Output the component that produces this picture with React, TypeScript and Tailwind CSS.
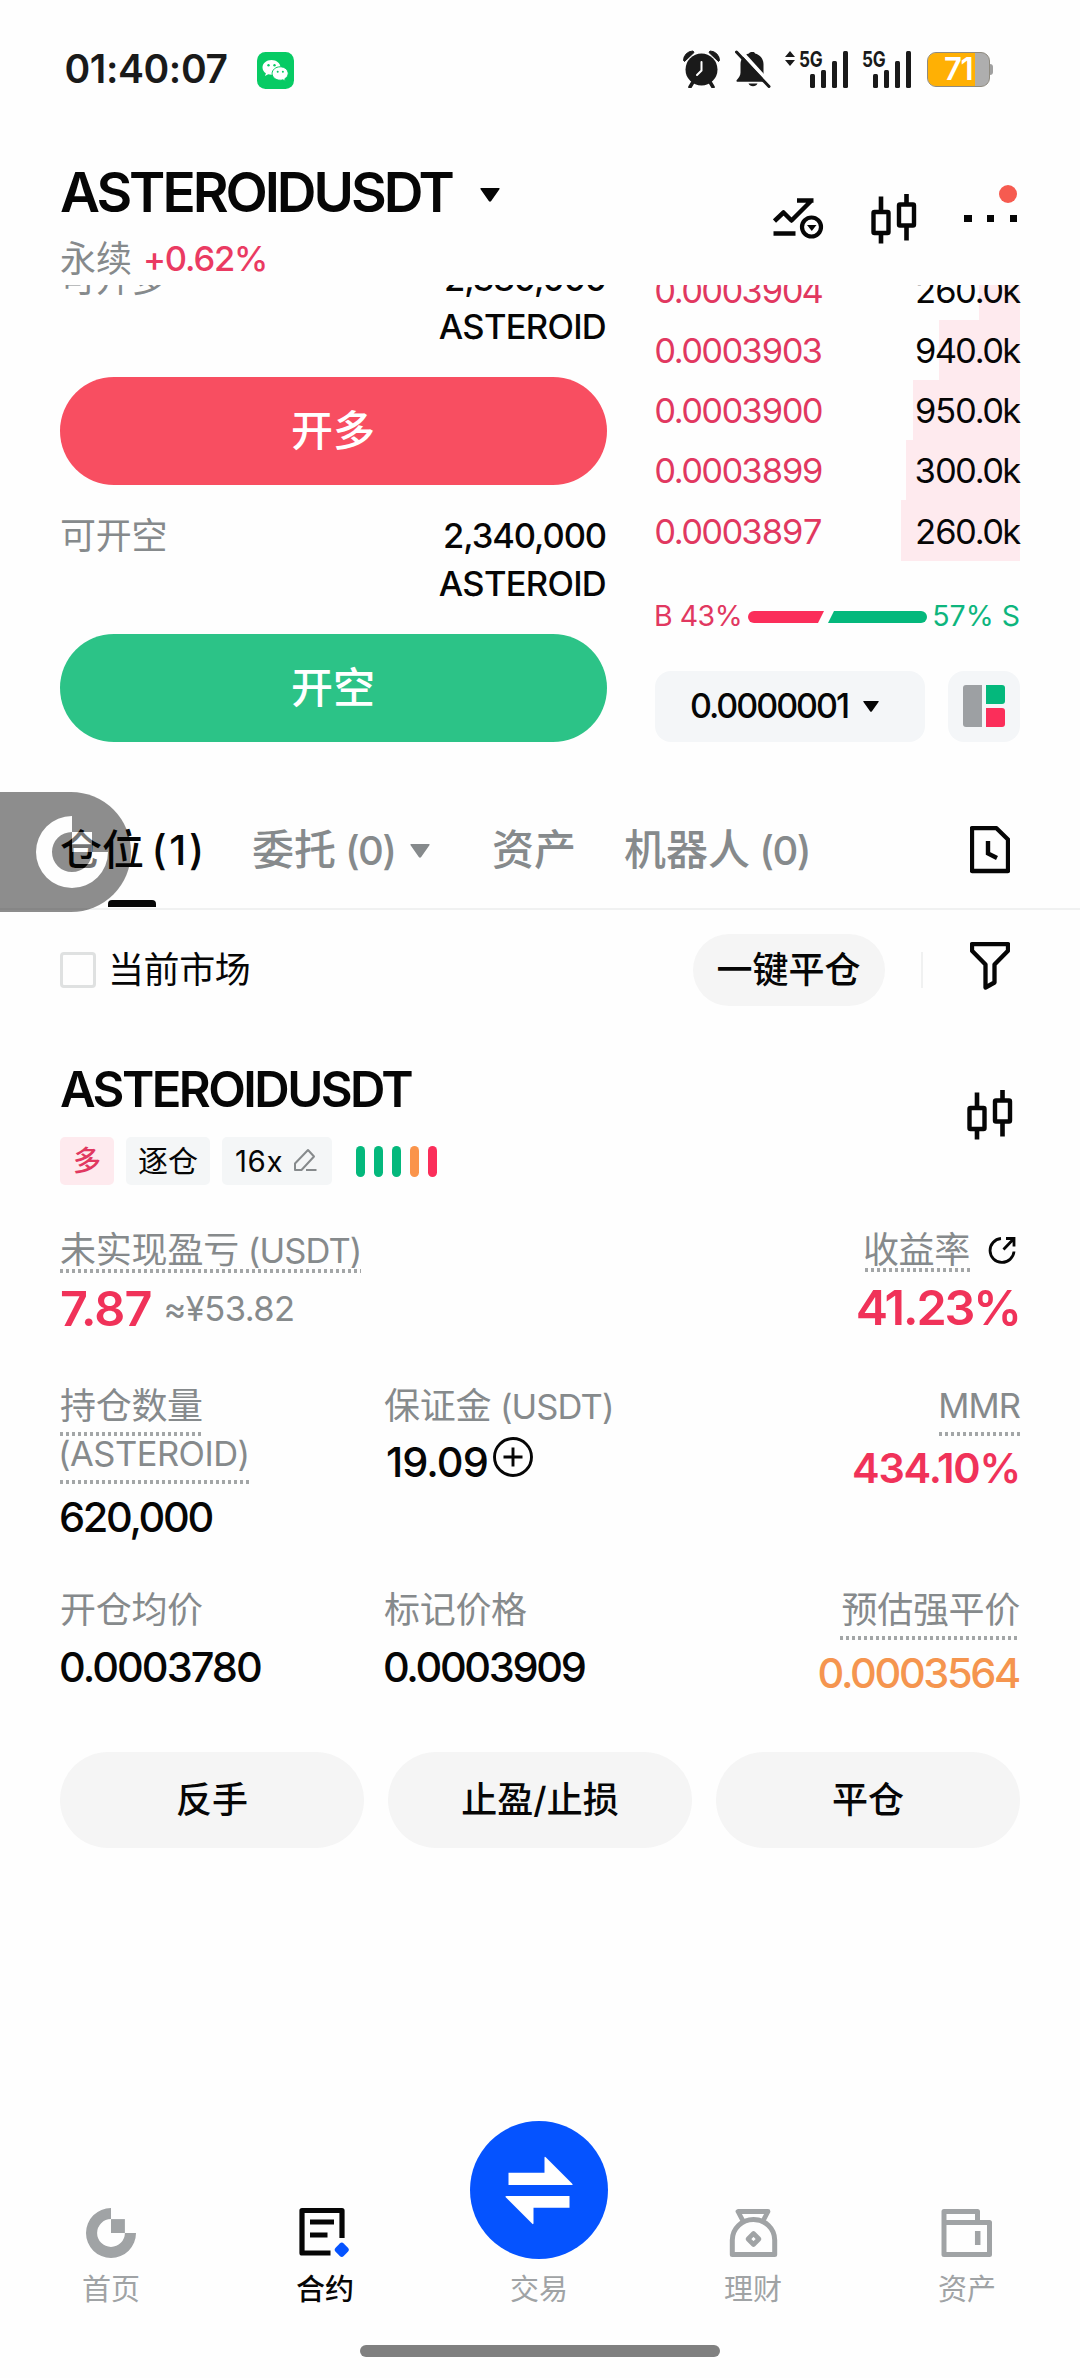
import type { ReactNode } from 'react';

type SvgProps = { box: string; w: number; h: number; className?: string; children: ReactNode };

function Icon({ box, w, h, className = '', children }: SvgProps) {
  return (
    <svg viewBox={box} width={w} height={h} fill="none" className={`shrink-0 ${className}`}>
      {children}
    </svg>
  );
}

function Candles({ className = '' }: { className?: string }) {
  return (
    <Icon box="0 0 46 50" w={46} h={50} className={className}>
      <rect x="2.500" y="18" width="15" height="21" rx="1" stroke="#060606" strokeWidth="4.400" />
      <rect x="28" y="10.500" width="15" height="21" rx="1" stroke="#060606" strokeWidth="4.400" />
      <path d="M10 2.500v15M10 40v9.500M35.500 0v10M35.500 32v14.500" stroke="#060606" strokeWidth="4.600" />
    </Icon>
  );
}

function Caret({ w, h, className = '' }: { w: number; h: number; className?: string }) {
  return (
    <svg viewBox="0 0 20 14" width={w} height={h} preserveAspectRatio="none" className={`shrink-0 ${className}`}>
      <path d="M1.200 0h17.600q1.600 0 .6 1.200l-8.200 11.800q-1.200 1.600-2.400 0L.6 1.200Q-.4 0 1.200 0z" fill="currentColor" />
    </svg>
  );
}

function RingLogo({ size, className = '' }: { size: number; className?: string }) {
  return (
    <svg viewBox="0 0 72 72" width={size} height={size} fill="currentColor" className={`shrink-0 ${className}`}>
      <path d="M36 0A36 36 0 1 0 72 36H56A20 20 0 1 1 36 16z" />
      <path d="M36 16h20v20H36z" />
    </svg>
  );
}

function Dots({ className = '' }: { className?: string }) {
  return (
    <div
      className={`h-[4px] bg-[repeating-linear-gradient(90deg,#a3a6a7_0_3px,transparent_3px_6px)] ${className}`}
    />
  );
}

function Signal({ arrows }: { arrows: boolean }) {
  return (
    <div className="relative flex h-[37px] items-end justify-end text-[#1a1a1a]">
      {arrows && (
        <Icon box="0 0 10 15" w={10} h={15} className="absolute top-0 left-[-14px]">
          <path d="M5 0l5 6H0zM5 15l5-6H0z" fill="#1a1a1a" />
        </Icon>
      )}
      <span className="absolute top-[-3px] left-0 origin-left scale-x-[0.800] text-[21.500px] leading-[22px] font-bold tracking-[-0.300px]">
        5G
      </span>
      <div className="ml-[10px] flex items-end gap-[5.500px]">
        <span className="h-[14px] w-[5.500px] rounded-[1.500px] bg-[#1a1a1a]" />
        <span className="h-[18px] w-[5.500px] rounded-[1.500px] bg-[#1a1a1a]" />
        <span className="h-[27px] w-[5.500px] rounded-[1.500px] bg-[#1a1a1a]" />
        <span className="h-[37px] w-[5.500px] rounded-[1.500px] bg-[#1a1a1a]" />
      </div>
    </div>
  );
}

function StatusBar() {
  return (
    <div className="flex h-[138px] items-center pr-[87px] pl-[64.500px]">
      <span className="w-[192px] text-[39px] leading-[40px] font-semibold tracking-[-0.400px] text-[#1a1a1a]">01:40:07</span>
      <Icon box="0 0 37 37" w={37} h={37} className="mt-[2px]">
        <rect width="37" height="37" rx="8.500" fill="#07cb64" />
        <path d="M14.500 8C9.500 8 5.500 11.300 5.500 15.400c0 2.300 1.300 4.400 3.400 5.800l-.9 2.800 3.200-1.700c1 .3 2.100.5 3.300.5 5 0 9-3.300 9-7.400S19.500 8 14.500 8z" fill="#fff" />
        <path d="M23.200 14.800c-4.500 0-8.100 3-8.100 6.700s3.600 6.700 8.100 6.700c1 0 1.900-.1 2.700-.4l2.600 1.500-.7-2.500c2-1.200 3.400-3.100 3.400-5.300 0-3.700-3.600-6.700-8-6.700z" fill="#fff" stroke="#07cb64" strokeWidth="1" />
        <g fill="#07cb64">
          <circle cx="11.500" cy="13.300" r="1.200" />
          <circle cx="17.500" cy="13.300" r="1.200" />
          <circle cx="20.700" cy="19.700" r="1" />
          <circle cx="25.900" cy="19.700" r="1" />
        </g>
      </Icon>
      <div className="ml-auto flex items-center">
        <Icon box="683 50 37 38" w={37} h={38}>
          <circle cx="701.500" cy="69.500" r="16" fill="#1a1a1a" />
          <path d="M683.500 60.500a9.500 9.500 0 0 1 9.500-9.500l1 1.500-9.500 9zM719.500 60.500a9.500 9.500 0 0 0-9.500-9.500l-1 1.500 9.500 9z" fill="#1a1a1a" stroke="#1a1a1a" strokeWidth="1" />
          <path d="M693 82l-3 5M710 82l3 5" stroke="#1a1a1a" strokeWidth="3.500" strokeLinecap="round" />
          <path d="M701.500 62v8.500l-4.500 4.500" stroke="#fff" strokeWidth="2" strokeLinecap="round" />
        </Icon>
        <Icon box="735 50 36 38" w={36} h={38} className="ml-[15px]">
          <path d="M753 52c1 0 2 .7 2 1.600 5 1.200 8.500 5.400 8.500 10.600v8.300c0 2.700 1.400 4.800 3.500 7.300.8 1 .5 2-.8 2h-28.500c-1.400 0-1.600-1-.7-2 2.200-2.500 3.500-4.600 3.500-7.300v-8.300c0-5.200 3.500-9.400 8.500-10.600.1-.9 1-1.600 4-1.600z" fill="#1a1a1a" />
          <path d="M748.500 83.500h9c-.8 1.800-2.400 2.800-4.500 2.800s-3.700-1-4.500-2.800z" fill="#1a1a1a" />
          <path d="M739.500 50l31 34" stroke="#fff" strokeWidth="4" />
          <path d="M736.500 52l32.500 34.500" stroke="#1a1a1a" strokeWidth="3" strokeLinecap="round" />
        </Icon>
        <div className="ml-[28px] w-[49px]">
          <Signal arrows />
        </div>
        <div className="ml-[14px] w-[49px]">
          <Signal arrows={false} />
        </div>
        <div className="relative ml-[16px] flex h-[35px] w-[66px] items-center">
          <div className="flex h-[35px] w-[63px] items-center overflow-hidden rounded-[9px] border border-[#8f8b80] bg-[#aeaeae]">
            <div className="flex h-full w-[47px] items-center justify-end bg-[#ffb004] pr-[3px] text-[31px] leading-[34px] font-semibold tracking-[-1.500px] text-white">
              71
            </div>
          </div>
          <div className="h-[11px] w-[3px] rounded-r-[3px] bg-[#a0a0a0]" />
        </div>
      </div>
    </div>
  );
}

function Header() {
  return (
    <header className="flex h-[147px] justify-between pr-[60px] pl-[60px]">
      <div className="pt-[21px]">
        <div className="flex items-center">
          <h1 className="text-[55px] leading-[66px] font-semibold tracking-[-3.050px] text-[#060606]">ASTEROIDUSDT</h1>
          <Caret w={20} h={14} className="mt-[5px] ml-[28px]" />
        </div>
        <div className="mt-[10px] flex text-[36px] leading-[48px]">
          <span className="text-[#868a8c]">永续</span>
          <span className="ml-[11px] text-[34.500px] font-medium tracking-[-1.180px] text-[#ea3a62]">+0.62%</span>
        </div>
      </div>
      <div className="flex items-center pt-[14px]">
        <Icon box="773 198 51 42" w={51} h={42}>
          <path d="M774.500 221l9-8.500 8 8 20.500-20.500M797 200.500h16.500" stroke="#060606" strokeWidth="4.500" strokeLinejoin="round" />
          <path d="M773.500 233.500h22" stroke="#060606" strokeWidth="4.500" />
          <circle cx="811.500" cy="227" r="9.500" stroke="#060606" strokeWidth="4.200" />
          <path d="M807 225h9.500l-4.700 6z" fill="#060606" />
        </Icon>
        <Candles className="ml-[47px]" />
        <div className="relative ml-[47px] flex w-[56px] justify-between pr-[3px]">
          <span className="size-[7.500px] bg-[#060606]" />
          <span className="size-[7.500px] bg-[#060606]" />
          <span className="size-[7.500px] bg-[#060606]" />
          <span className="absolute top-[-30px] right-[3px] size-[18px] rounded-full bg-[#f65b50]" />
        </div>
      </div>
    </header>
  );
}

function Available({ label, amount }: { label: string; amount: string }) {
  return (
    <div className="flex h-[97px] items-start justify-between pt-[1px] pr-[1px]">
      <span className="text-[36px] leading-[49px] tracking-[-0.300px] text-[#868a8c]">{label}</span>
      <span className="text-right text-[34.500px] leading-[48px] font-medium tracking-[-1.100px] text-[#060606]">
        {amount}
        <br />
        <span className="tracking-[-0.720px]">ASTEROID</span>
      </span>
    </div>
  );
}

const asks = [
  { price: '0.0003904', size: '260.0k', depth: 41 },
  { price: '0.0003903', size: '940.0k', depth: 81 },
  { price: '0.0003900', size: '950.0k', depth: 107 },
  { price: '0.0003899', size: '300.0k', depth: 114 },
  { price: '0.0003897', size: '260.0k', depth: 119 },
];

function TradePanel() {
  return (
    <section className="h-[507px] overflow-hidden">
      <div className="mt-[-31px] flex gap-[48px] px-[60px]">
        <div className="w-[547px]">
          <Available label="可开多" amount="2,380,000" />
          <button className="mt-[26px] block h-[108px] w-full rounded-full bg-[#f84e61] pr-[1px] pb-[2px] text-[42px] font-medium text-white">开多</button>
          <div className="mt-[26px]">
            <Available label="可开空" amount="2,340,000" />
          </div>
          <button className="mt-[26px] block h-[108px] w-full rounded-full bg-[#2cc387] pr-[1px] pb-[2px] text-[42px] font-medium text-white">开空</button>
        </div>
        <div className="w-[365px] pt-[5.250px]">
          {asks.map((a) => (
            <div key={a.price} className="relative flex h-[60.250px] items-center justify-between pt-[2px] text-[34.500px] tabular-nums">
              <div className="absolute inset-y-0 right-0 bg-[#feeaee]" style={{ width: a.depth }} />
              <span className="relative ml-[-1px] tracking-[-2.300px] text-[#e13860]">{a.price}</span>
              <span className="relative mr-[1px] tracking-[-2.200px] text-[#060606]">{a.size}</span>
            </div>
          ))}
          <div className="mt-[32px] flex h-[48px] items-center text-[28.500px]">
            <span className="ml-[-1px] w-[94px] tracking-[-0.500px] text-[#e13860]">B 43%</span>
            <Icon box="0 0 179 12" w={179} h={12}>
              <path d="M6 0h70l-6 12H6A6 6 0 0 1 6 0z" fill="#fb2e5a" />
              <path d="M86 0h87a6 6 0 0 1 0 12H80z" fill="#04b87c" />
            </Icon>
            <span className="ml-auto text-[#0db57d]">57% S</span>
          </div>
          <div className="mt-[30px] flex justify-between">
            <div className="flex h-[71px] w-[270px] items-center justify-center rounded-[16px] bg-[#f4f6f8] pr-[11px] pb-[1px] text-[34px] font-medium tracking-[-2px] text-[#060606]">
              0.0000001
              <Caret w={16} h={11} className="mt-[2px] ml-[15px]" />
            </div>
            <div className="flex h-[71px] w-[72px] items-center justify-center gap-[4px] rounded-[16px] bg-[#f4f6f8]">
              <span className="h-[42px] w-[19px] rounded-l-[3px] bg-[#9da0a3]" />
              <div className="flex flex-col gap-[4px]">
                <span className="h-[19px] w-[19px] rounded-r-[3px] bg-[#04b87c]" />
                <span className="h-[19px] w-[19px] rounded-r-[3px] bg-[#fb2e5a]" />
              </div>
            </div>
          </div>
        </div>
      </div>
    </section>
  );
}

function Tabs() {
  return (
    <nav className="relative flex h-[118px] items-center border-b-2 border-[#f0f1f1] pr-[70px] pl-[60px] text-[42px] leading-[60px] text-[#868a8c]">
      <div className="relative w-[192px] font-medium text-[#060606]">
        仓位<span className="text-[41px] tracking-[2.600px] [word-spacing:-6px]"> (1)</span>
        <span className="absolute bottom-[-27px] left-[48px] h-[7px] w-[48px] rounded-t-[4px] bg-[#060606]" />
      </div>
      <div className="flex w-[240px] items-center">
        <span className="font-medium">
          委托<span className="text-[40px] tracking-[-1.700px]"> (0)</span>
        </span>
        <Caret w={20} h={14} className="mt-[2px] ml-[15px]" />
      </div>
      <div className="w-[132px] font-medium">资产</div>
      <div className="font-medium">
        机器人<span className="text-[40px] tracking-[-1.500px]"> (0)</span>
      </div>
      <Icon box="970 826 40 48" w={40} h={48} className="ml-auto">
        <path d="M972 828.200h24.500l11.500 11.300v31.500h-36z" stroke="#060606" strokeWidth="4.300" strokeLinejoin="round" />
        <path d="M988 841v12.500l9 4.500" stroke="#060606" strokeWidth="4.400" />
      </Icon>
      <div className="absolute top-0 left-0 flex h-[120px] w-[131px] items-center rounded-r-full bg-black pl-[36px] opacity-[0.440]">
        <RingLogo size={72} className="text-white" />
      </div>
    </nav>
  );
}

function FilterRow() {
  return (
    <div className="flex h-[120px] items-center pr-[70px] pl-[60px] text-[36px] text-[#060606]">
      <span className="size-[36px] rounded-[4px] border-[3px] border-[#dfe1e1]" />
      <span className="ml-[12px] tracking-[-0.400px]">当前市场</span>
      <button className="ml-auto h-[72px] w-[192px] rounded-full bg-[#f5f5f5] font-medium">一键平仓</button>
      <span className="ml-[36px] h-[36px] w-[2.500px] bg-[#f0f1f1]" />
      <Icon box="970 941 40 49" w={40} h={49} className="mt-[-9px] ml-[47px]">
        <path d="M972 944.200h36v6.500l-13.500 13.800v18l-9 5v-23L972 950.700z" stroke="#060606" strokeWidth="4.300" strokeLinejoin="round" />
      </Icon>
    </div>
  );
}

const label = 'text-[36px] leading-[48px] tracking-[-0.300px] text-[#868a8c]';

function Position() {
  return (
    <section className="px-[60px] pt-[30px]">
      <div className="flex justify-between">
        <div>
          <h2 className="text-[49px] leading-[60px] font-semibold tracking-[-2.550px] text-[#060606]">ASTEROIDUSDT</h2>
          <div className="mt-[17px] flex items-center text-[30px] leading-[48px] text-[#060606]">
            <span className="w-[54px] rounded-[5px] bg-[#feeaee] text-center text-[28px] font-medium text-[#e13860]">多</span>
            <span className="ml-[12px] w-[84px] rounded-[5px] bg-[#f4f6f7] text-center">逐仓</span>
            <span className="ml-[12px] flex w-[110px] items-center rounded-[5px] bg-[#f4f6f7] pl-[13px]">
              <span className="w-[49px] text-[29.500px] tracking-[0.600px]">16x</span>
              <Icon box="0 0 24 24" w={24} h={24} className="mt-[-2px] ml-[9px]">
                <path d="M2 22v-6.500L15 2l6 6.500L8.500 22zM13 22h10.500" stroke="#868a8c" strokeWidth="2" strokeLinejoin="round" />
              </Icon>
            </span>
            <div className="ml-[24px] flex gap-[9px]">
              <span className="h-[31px] w-[9px] rounded-full bg-[#04b87c]" />
              <span className="h-[31px] w-[9px] rounded-full bg-[#04b87c]" />
              <span className="h-[31px] w-[9px] rounded-full bg-[#04b87c]" />
              <span className="h-[31px] w-[9px] rounded-full bg-[#fa944b]" />
              <span className="h-[31px] w-[9px] rounded-full bg-[#fb2e5a]" />
            </div>
          </div>
        </div>
        <Candles className="mt-[30px] mr-[7px]" />
      </div>

      <div className="mt-[41px] flex justify-between">
        <div>
          <div className="w-[301px] text-[36px] leading-[48px] tracking-[-0.200px] whitespace-nowrap text-[#868a8c]">
            未实现盈亏<span className="text-[34.500px] tracking-[-0.900px]"> (USDT)</span>
          </div>
          <Dots className="mt-[-6px] w-[301px]" />
          <div className="mt-[8px] flex items-center leading-[56px]">
            <span className="text-[48.500px] font-semibold tracking-[-0.870px] text-[#f03259]">7.87</span>
            <span className="ml-[12px] text-[34.500px] tracking-[-0.550px] text-[#868a8c]">≈¥53.82</span>
          </div>
        </div>
        <div className="flex flex-col items-end">
          <div className="flex items-center pr-[3px]">
            <span className={label}>收益率</span>
            <Icon box="988 1237 29 29" w={29} h={29} className="ml-[18px]">
              <path d="M1001 1239.500a12 12 0 1 0 13 13" stroke="#060606" strokeWidth="2.800" />
              <path d="M1003.500 1250.500l10-10.500M1006 1239.500h8v8" stroke="#060606" strokeWidth="2.800" />
            </Icon>
          </div>
          <Dots className="mt-[-6px] mr-[50px] w-[105px]" />
          <div className="mt-[8px] text-[48.500px] leading-[56px] font-semibold tracking-[-2.060px] text-[#f03259]">41.23%</div>
        </div>
      </div>

      <div className="mt-[45px] flex h-[204px] items-start">
        <div className="w-[324px]">
          <div className={label}>持仓数量</div>
          <Dots className="mt-[2px] w-[143px]" />
          <div className="ml-[-2px] text-[34.500px] leading-[36px] tracking-[-0.530px] text-[#868a8c]">(ASTEROID)</div>
          <Dots className="mt-[8px] w-[189px]" />
          <div className="mt-[9px] ml-[-1px] text-[41.500px] leading-[48px] font-medium tracking-[-2.320px] text-[#060606]">620,000</div>
        </div>
        <div>
          <div className={label}>
            保证金<span className="text-[34.500px] tracking-[-0.900px]"> (USDT)</span>
          </div>
          <div className="mt-[5px] flex items-center text-[41.500px] leading-[52px] font-medium text-[#060606]">
            <span className="ml-[2px] w-[107px] tracking-[-0.950px]">19.09</span>
            <Icon box="0 0 40 40" w={40} h={40} className="mt-[-10px]">
              <circle cx="20" cy="20" r="18.500" stroke="#060606" strokeWidth="2.900" />
              <path d="M20 10.500v19M10.500 20h19" stroke="#060606" strokeWidth="2.900" />
            </Icon>
          </div>
        </div>
        <div className="ml-auto flex flex-col items-end">
          <div className="text-[34.500px] leading-[48px] tracking-[-0.910px] text-[#868a8c]">MMR</div>
          <Dots className="mt-[2px] w-[81px]" />
          <div className="mt-[8px] text-[41.500px] leading-[48px] font-semibold tracking-[-1.200px] text-[#f03259]">434.10%</div>
        </div>
      </div>

      <div className="flex h-[166px] items-start">
        <div className="w-[324px]">
          <div className={label}>开仓均价</div>
          <div className="mt-[9px] ml-[-1px] text-[41.500px] leading-[48px] font-medium tracking-[-1.970px] text-[#060606]">0.0003780</div>
        </div>
        <div>
          <div className={label}>标记价格</div>
          <div className="mt-[9px] ml-[-1px] text-[41.500px] leading-[48px] font-medium tracking-[-2.350px] text-[#060606]">0.0003909</div>
        </div>
        <div className="ml-auto flex flex-col items-end">
          <div className={label}>预估强平价</div>
          <Dots className="mt-[2px] w-[180px]" />
          <div className="mt-[9px] mr-[1px] text-[41.500px] leading-[48px] font-medium tracking-[-2.350px] text-[#f5954f]">0.0003564</div>
        </div>
      </div>

      <div className="grid grid-cols-3 gap-[24px] text-[36px] font-medium text-[#060606]">
        <button className="h-[96px] rounded-full bg-[#f5f5f5]">反手</button>
        <button className="h-[96px] rounded-full bg-[#f5f5f5]">止盈/止损</button>
        <button className="h-[96px] rounded-full bg-[#f5f5f5]">平仓</button>
      </div>
    </section>
  );
}

function NavItem({ text, active = false, children }: { text: string; active?: boolean; children: ReactNode }) {
  return (
    <div className={`flex flex-1 flex-col items-center ${active ? 'font-medium text-[#060606]' : 'text-[#a0a3a5]'}`}>
      {children}
      <span className="mt-[12px] text-[29px] leading-[40px]">{text}</span>
    </div>
  );
}

function BottomNav() {
  return (
    <footer className="mt-auto pb-[21px]">
      <div className="flex items-end pr-[6px] pl-[4px]">
        <NavItem text="首页">
          <RingLogo size={50} />
        </NavItem>
        <NavItem text="合约" active>
          <Icon box="300 2207 52 51" w={52} h={51}>
            <path d="M343 2238v-27.500h-40v42.500h28.500" stroke="#060606" strokeWidth="5.200" strokeLinejoin="round" />
            <path d="M311 2222h24M311 2235h17.500" stroke="#060606" strokeWidth="5.200" />
            <rect x="337" y="2244" width="11.500" height="11.500" rx="2.800" transform="rotate(45 342.750 2249.750)" fill="#0553ff" />
          </Icon>
        </NavItem>
        <NavItem text="交易">
          <Icon box="470 2121 138 138" w={138} h={138} className="mb-[-1px]">
            <circle cx="539" cy="2190" r="69" fill="#0553ff" />
            <path d="M508.500 2172.700h36V2158q0-2 1.500-.5l26 26q1.500 1.500-.5 1.500h-63z" fill="#fff" />
            <path d="M569.500 2207.700h-36v15.300q0 2-1.500.5l-26-26q-1.500-1.500.5-1.500h63z" fill="#fff" />
          </Icon>
        </NavItem>
        <NavItem text="理财">
          <Icon box="729 2207 49 50" w={49} h={50}>
            <path d="M732.300 2253.500v-14.500a21.200 20.500 0 0 1 42.400 0v14.500z" stroke="currentColor" strokeWidth="5" strokeLinejoin="round" />
            <path d="M743 2220l-5-9.500h30l-5 9.500" stroke="currentColor" strokeWidth="4.800" strokeLinejoin="round" />
            <path d="M753.500 2232.500l5.500 5.500-5.500 5.500-5.500-5.500z" stroke="currentColor" strokeWidth="4.600" strokeLinejoin="round" />
          </Icon>
        </NavItem>
        <NavItem text="资产">
          <Icon box="941 2207 52 50" w={52} h={50}>
            <path d="M944 2221.500h45.500v32H944zM944 2221.500v-11h33.500v11" stroke="currentColor" strokeWidth="5" strokeLinejoin="round" />
            <path d="M977.700 2230v14" stroke="currentColor" strokeWidth="5.500" />
          </Icon>
        </NavItem>
      </div>
      <div className="mx-auto mt-[35px] h-[12px] w-[360px] rounded-full bg-[#808080]" />
    </footer>
  );
}

export default function App() {
  return (
    <div className="flex h-[2378px] w-[1080px] flex-col overflow-hidden bg-[#fefefe] font-['Inter','Noto_Sans_CJK_SC',sans-serif] text-[#060606]">
      <StatusBar />
      <Header />
      <TradePanel />
      <Tabs />
      <FilterRow />
      <Position />
      <BottomNav />
    </div>
  );
}
